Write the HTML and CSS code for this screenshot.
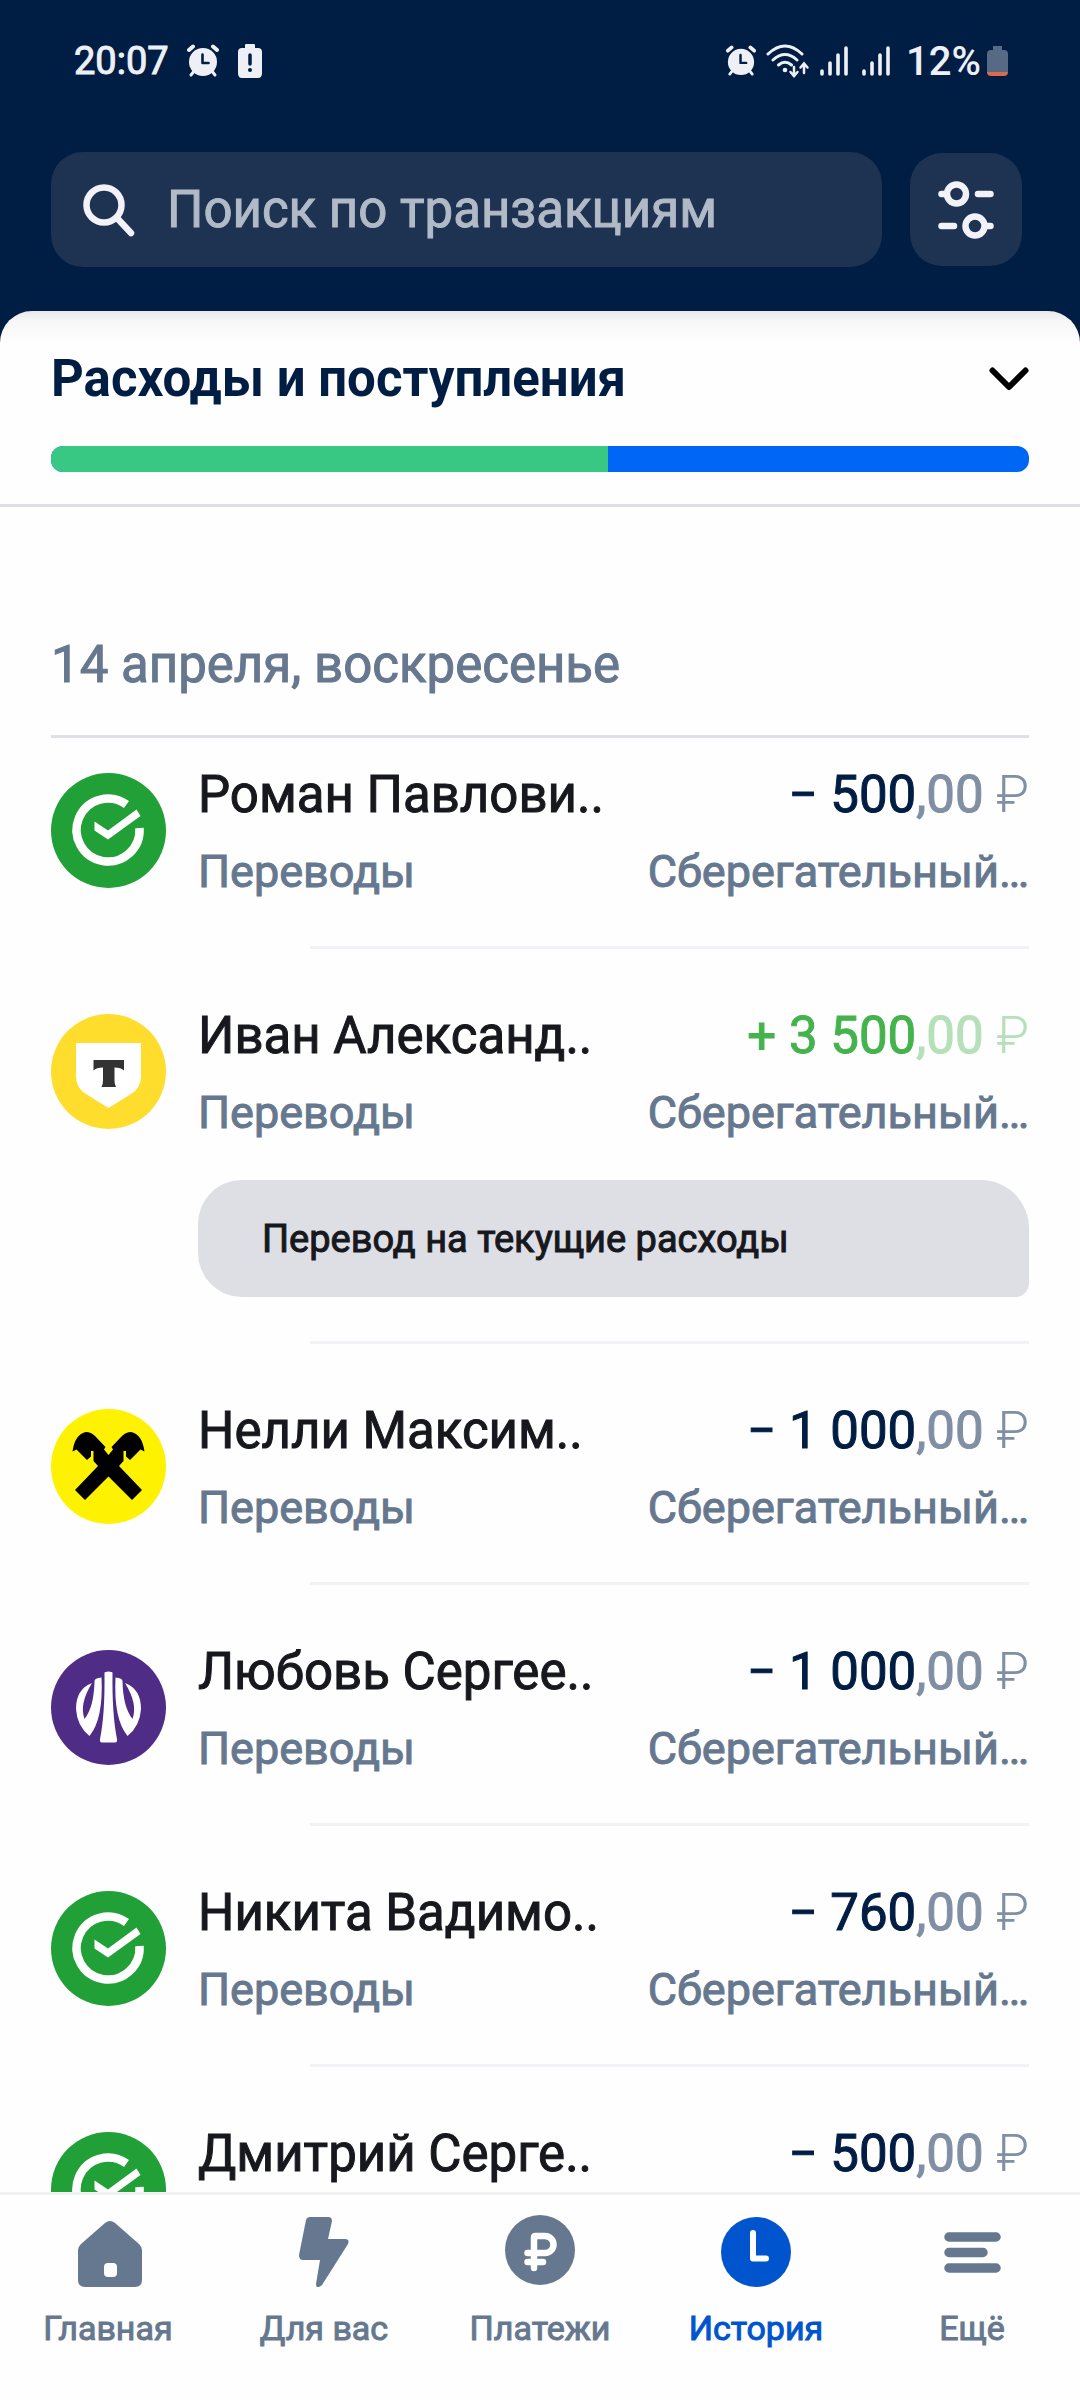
FILE: index.html
```html
<!DOCTYPE html>
<html lang="ru">
<head>
<meta charset="utf-8">
<meta name="viewport" content="width=device-width, initial-scale=1">
<title>История</title>
<link rel="stylesheet" href="styles.css">
</head>
<body>
<svg class="defs" aria-hidden="true">
  <symbol id="alarm" viewBox="0 0 32 34">
    <g stroke="currentColor" stroke-width="4" stroke-linecap="round" fill="none"><path d="M2 6 6 2.500M30 6 26 2.500"/><path d="M4 31 8 26M28 31 24 26" stroke-width="3"/></g>
    <circle cx="16" cy="18" r="14" fill="currentColor"/>
    <path d="M15.500 10.500v8.500h6" stroke="#001d43" stroke-width="2.600" stroke-linecap="round" stroke-linejoin="round" fill="none"/>
  </symbol>
  <symbol id="signal" viewBox="0 0 28 30">
    <path d="M2 25v3M10 17v11M18 9v19M26 2v26" stroke="currentColor" stroke-width="3.600" stroke-linecap="round"/>
  </symbol>
  <symbol id="bank-check" viewBox="0 0 115 115">
    <circle cx="57.500" cy="57.500" r="57.500" fill="#22a038"/>
    <path d="M75.500 31.500A31.500 31.500 0 1 0 88.500 55" fill="none" stroke="#fff" stroke-width="8.500"/>
    <path d="M43.500 48.500 57 57.500 85.500 36.500 89.500 43 57 66.500 43.500 57.500z" fill="#fff"/>
  </symbol>
  <symbol id="bank-shield" viewBox="0 0 115 115">
    <circle cx="57.500" cy="57.500" r="57.500" fill="#ffdd2d"/>
    <path d="M25 29h65v33q0 12-10 18L57.500 94 35 80q-10-6-10-18z" fill="#fff"/>
    <path d="M42.500 46h30.500v10.500q-3-3-9.500-3v13q0 4 1.500 6.500H50.500q1.500-2.500 1.500-6.500v-13q-6.500 0-9.500 3z" fill="#333"/>
  </symbol>
  <symbol id="bank-cross" viewBox="0 0 115 115">
    <circle cx="57.500" cy="57.500" r="57.500" fill="#fff200"/>
    <path d="M91 81 81 91 47 57 42.500 52V42H40V47.500L36 51 25.500 40.500 21.500 42.500Q24 25 35 23q5 0 9 4L54.500 38 53 40.500 57.500 46z"/>
    <path d="M24 81 34 91 68 57 72.500 52V42H75V47.500L79 51 89.500 40.500 93.500 42.500Q91 25 80 23q-5 0-9 4L60.500 38 62 40.500 57.500 46z"/>
  </symbol>
  <symbol id="bank-rays" viewBox="0 0 115 115">
    <circle cx="57.500" cy="57.500" r="57.500" fill="#4f2d87"/>
    <g fill="#fff">
      <path d="M53.500 23q0-1.500 4-1.500t4 1.500Q61 65 66 89q.5 3.500-2 3.500H51q-2.500 0-2-3.500Q54 65 53.500 23z"/>
      <path d="M50.500 27.500Q43.500 28 43.500 31 43 57 33.500 69 28 54 41 33 25 39 25 59q1 17 13.500 27 14-17 12-58.500z"/>
      <path d="M64.500 27.500Q71.500 28 71.500 31 72 57 81.500 69 87 54 74 33 90 39 90 59q-1 17-13.500 27-14-17-12-58.500z"/>
    </g>
  </symbol>
</svg>

<header class="top">
  <div class="status">
    <div class="status-left">
      <span class="clock">20:07</span>
      <svg width="32" height="34" aria-hidden="true"><use href="#alarm"/></svg>
      <svg class="warn" width="24" height="34" viewBox="0 0 24 34" aria-hidden="true"><path d="M8 0h8q1 0 1 1v3h3q4 0 4 4v21q0 5-4 5H4q-4 0-4-5V8q0-4 4-4h3V1q0-1 1-1z" fill="currentColor"/><path d="M12 11v9" stroke="#001d43" stroke-width="3.500" stroke-linecap="round"/><circle cx="12" cy="26" r="2" fill="#001d43"/></svg>
    </div>
    <div class="status-right">
      <svg width="30" height="32" aria-hidden="true"><use href="#alarm"/></svg>
      <svg width="44" height="34" viewBox="0 0 44 34" aria-hidden="true"><g fill="none" stroke="currentColor" stroke-width="3" stroke-linecap="round"><path d="M2 10Q19-6 36 10M7 16Q19 5 31 16M12.500 21Q19 15.500 25.500 21"/><path d="M28 23v8M24.500 28l3.500 4 3.500-4M38 29v-8M34.500 23.500l3.500-4 3.500 4" stroke-width="2.500"/></g><circle cx="19" cy="26" r="2.300" fill="currentColor"/></svg>
      <svg width="28" height="30" aria-hidden="true"><use href="#signal"/></svg>
      <svg class="sim" width="28" height="30" aria-hidden="true"><use href="#signal"/></svg>
      <span class="percent">12%</span>
      <svg width="21" height="30" viewBox="0 0 21 30" aria-hidden="true"><path d="M6 0h9v4h2q4 0 4 4v18H0V8q0-4 4-4h2z" fill="#566a86"/><path d="M0 26h21q0 4-4 4H4q-4 0-4-4z" fill="#dc6b4c"/></svg>
    </div>
  </div>
  <form class="search-row">
    <label class="search">
      <svg width="52" height="54" viewBox="0 0 52 54" fill="none" stroke="#f2f2f8" stroke-width="6.500" stroke-linecap="round" aria-hidden="true"><circle cx="21" cy="22" r="17.500"/><path d="M34 35 48 50"/></svg>
      <input type="search" placeholder="Поиск по транзакциям" aria-label="Поиск по транзакциям">
    </label>
    <button class="filter" type="button" aria-label="Фильтры">
      <svg width="56" height="58" viewBox="0 0 56 58" fill="none" stroke="#f2f2f8" stroke-width="6.500" stroke-linecap="round" aria-hidden="true"><circle cx="18.500" cy="13" r="9.500"/><circle cx="37" cy="45" r="9.500"/><path d="M3.500 13H8M49 45h3.500M40 13h12.500M3.500 45H16"/></svg>
    </button>
  </form>
</header>

<main class="sheet">
  <section class="summary">
    <button class="summary-toggle" type="button">
      <span>Расходы и поступления</span>
      <svg width="40" height="24" viewBox="0 0 40 24" fill="none" stroke="#000" stroke-width="6" stroke-linecap="round" stroke-linejoin="round" aria-hidden="true"><path d="M3.500 3.500 20 20 36.500 3.500"/></svg>
    </button>
    <div class="ratio"><div class="ratio-income" style="width:57%"></div></div>
  </section>

  <section class="day">
    <h2>14 апреля, воскресенье</h2>
    <ul class="list">
      <li class="item">
        <svg class="avatar" aria-hidden="true"><use href="#bank-check"/></svg>
        <div class="line"><span class="name">Роман Павлови..</span><span class="amount">− 500<span class="minor">,00 <span class="cur">₽</span></span></span></div>
        <div class="line sub"><span>Переводы</span><span>Сберегательный…</span></div>
      </li>
      <li class="item">
        <svg class="avatar" aria-hidden="true"><use href="#bank-shield"/></svg>
        <div class="line"><span class="name">Иван Александ..</span><span class="amount income">+ 3 500<span class="minor">,00 <span class="cur">₽</span></span></span></div>
        <div class="line sub"><span>Переводы</span><span>Сберегательный…</span></div>
        <p class="note">Перевод на текущие расходы</p>
      </li>
      <li class="item">
        <svg class="avatar" aria-hidden="true"><use href="#bank-cross"/></svg>
        <div class="line"><span class="name">Нелли Максим..</span><span class="amount">− 1 000<span class="minor">,00 <span class="cur">₽</span></span></span></div>
        <div class="line sub"><span>Переводы</span><span>Сберегательный…</span></div>
      </li>
      <li class="item">
        <svg class="avatar" aria-hidden="true"><use href="#bank-rays"/></svg>
        <div class="line"><span class="name">Любовь Сергее..</span><span class="amount">− 1 000<span class="minor">,00 <span class="cur">₽</span></span></span></div>
        <div class="line sub"><span>Переводы</span><span>Сберегательный…</span></div>
      </li>
      <li class="item">
        <svg class="avatar" aria-hidden="true"><use href="#bank-check"/></svg>
        <div class="line"><span class="name">Никита Вадимо..</span><span class="amount">− 760<span class="minor">,00 <span class="cur">₽</span></span></span></div>
        <div class="line sub"><span>Переводы</span><span>Сберегательный…</span></div>
      </li>
      <li class="item">
        <svg class="avatar" aria-hidden="true"><use href="#bank-check"/></svg>
        <div class="line"><span class="name">Дмитрий Серге..</span><span class="amount">− 500<span class="minor">,00 <span class="cur">₽</span></span></span></div>
      </li>
    </ul>
  </section>
</main>

<nav class="tabs">
  <a href="#home"><svg width="72" height="72" viewBox="0 0 72 72" aria-hidden="true"><path d="M33 8q5-4 10 0L67 29q3 3 3 6v30q0 7-7 7H13q-7 0-7-7V35q0-3 3-6z" fill="currentColor"/><rect x="32" y="48" width="13" height="14" rx="4" fill="#fff"/></svg><span>Главная</span></a>
  <a href="#offers"><svg width="72" height="72" viewBox="0 0 72 72" aria-hidden="true"><path d="M22 2h18q4 0 4 4l-4 18h17q5 0 3 5L34 70q-6 5-6-1l4-24H15q-4 0-4-5L18 5q1-3 4-3z" fill="currentColor"/></svg><span>Для вас</span></a>
  <a href="#payments"><svg width="72" height="72" viewBox="0 0 72 72" aria-hidden="true"><circle cx="36" cy="35" r="35" fill="currentColor"/><path d="M30 53V22.500q0-1.500 1.500-1.500H41a8.500 8.500 0 0 1 0 17H23.500M23.500 47H39" fill="none" stroke="#fff" stroke-width="6.500" stroke-linecap="round"/></svg><span>Платежи</span></a>
  <a class="active" href="#history" aria-current="page"><svg width="72" height="72" viewBox="0 0 72 72" aria-hidden="true"><circle cx="36" cy="37" r="35" fill="currentColor"/><path d="M33 18v25.500h13" fill="none" stroke="#fff" stroke-width="6" stroke-linecap="round" stroke-linejoin="round"/></svg><span>История</span></a>
  <a href="#more"><svg width="72" height="72" viewBox="0 0 72 72" aria-hidden="true"><path d="M13 22h47M13 37.500h34M13 53h47" stroke="currentColor" stroke-width="9.500" stroke-linecap="round"/></svg><span>Ещё</span></a>
</nav>
</body>
</html>
```
FILE: styles.css
```css
* { box-sizing: border-box; }

body {
  display: flex;
  flex-direction: column;
  height: 100vh;
  margin: 0;
  overflow: hidden;
  background: #001d43;
  color: #17181d;
  font-family: Roboto, "Noto Sans", sans-serif;
}

.defs { display: none; }
svg { flex: none; }

/* Slightly heavier than regular, without the wider medium glyphs */
.clock,
.search input,
.day,
.tabs { -webkit-text-stroke: 1px currentColor; }

/* Header */
.status {
  display: flex;
  align-items: center;
  justify-content: space-between;
  height: 120px;
  padding: 2px 72px 0 74px;
  color: #eef0f6;
  font-size: 38px;
}
.status-left, .status-right { display: flex; align-items: center; }
.clock { margin-right: 18px; }
.warn { margin-left: 19px; }
.status-right { gap: 10px; }
.sim { margin-left: 4px; }
.percent { margin-left: 6px; margin-right: -4px; font-size: 40px; font-weight: 500; }

.search-row {
  display: flex;
  align-items: center;
  gap: 28px;
  margin: 0;
  padding: 32px 58px 44px 51px;
}
.search {
  display: flex;
  flex: 1;
  align-items: center;
  gap: 32px;
  height: 115px;
  padding: 0 32px;
  border-radius: 32px;
  background: #1e3251;
}
.search input {
  flex: 1;
  min-width: 0;
  padding: 0;
  border: 0;
  outline: 0;
  background: none;
  color: #fff;
  font: 400 51px/64px Roboto, "Noto Sans", sans-serif;
}
.search input::placeholder { color: #b1bac7; opacity: 1; }
.filter {
  display: grid;
  place-items: center;
  width: 112px;
  height: 113px;
  padding: 0;
  border: 0;
  border-radius: 32px;
  background: #1e3251;
}

/* Sheet */
.sheet {
  flex: 1;
  min-height: 0;
  overflow: hidden;
  border-radius: 32px 32px 0 0;
  background: linear-gradient(#e9e9eb, #f7f7f7 10px, #fefefe 32px);
}
.summary {
  padding: 36px 51px 32px;
  border-bottom: 3px solid #dddfe5;
}
.summary-toggle {
  display: flex;
  align-items: center;
  justify-content: space-between;
  width: 100%;
  height: 64px;
  padding: 0;
  border: 0;
  background: none;
  color: #001d43;
  font: 700 51px/64px Roboto, "Noto Sans", sans-serif;
}
.ratio {
  height: 26px;
  margin-top: 35px;
  overflow: hidden;
  border-radius: 12px;
  background: #0066f5;
}
.ratio-income { height: 100%; background: #38c884; }

/* Transactions */
.day { padding: 126px 51px 0; }
.day h2 {
  margin: 0;
  padding-bottom: 38px;
  border-bottom: 3px solid #dde0e5;
  color: #66788f;
  font: 400 51px/64px Roboto, "Noto Sans", sans-serif;
}
.list { margin: 0; padding: 0; list-style: none; }
.item {
  display: grid;
  grid-template-columns: 115px 1fr;
  column-gap: 32px;
  padding-top: 57px;
}
.item:first-child { padding-top: 27px; }
.item::after {
  grid-column: 2;
  height: 3px;
  margin: 44px 0 0 112px;
  background: #f2f2f6;
  content: "";
}
.avatar {
  grid-row: 1 / span 2;
  width: 115px;
  height: 115px;
  margin-top: 8px;
}
.line {
  display: flex;
  grid-column: 2;
  justify-content: space-between;
  font-size: 51px;
  line-height: 60px;
  white-space: nowrap;
}
.sub {
  margin-top: 17px;
  color: #66788f;
  font-size: 45px;
}
.amount { color: #001d43; }
.minor { color: #808fa4; }
.cur { font-weight: 300; -webkit-text-stroke: 0; }
.income { color: #45b34d; }
.income .minor { color: #b6e0b9; }
.note {
  grid-column: 2;
  margin: 37px 0 0;
  padding: 29px 64px 28px;
  border-radius: 44px 48px 14px 44px;
  background: #dddfe5;
  font-size: 38px;
  line-height: 60px;
}

/* Bottom navigation */
.tabs {
  display: grid;
  grid-template-columns: repeat(5, 1fr);
  padding: 20px 0 52px;
  border-top: 3px solid #eff1f2;
  background: #fefefe;
}
.tabs a {
  display: flex;
  flex-direction: column;
  align-items: center;
  gap: 21px;
  color: #66788f;
  font-size: 34px;
  line-height: 40px;
  text-decoration: none;
}
.tabs .active { color: #0055ce; }
```
